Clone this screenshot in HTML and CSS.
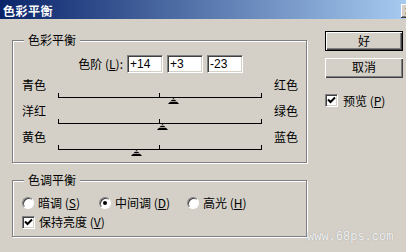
FILE: index.html
```html
<!DOCTYPE html>
<html lang="zh-CN">
<head>
<meta charset="utf-8">
<title>色彩平衡</title>
<link rel="stylesheet" href="styles.css">
</head>
<body>
<div class="titlebar">
  <span class="title">色彩平衡</span>
  <span class="close">×</span>
</div>
<div class="main">
  <div class="left">
    <fieldset class="group g1">
      <legend>色彩平衡</legend>
      <div class="levels">
        <span class="levels-label">色阶 (<u>L</u>):</span>
        <input class="field" value="+14" readonly>
        <input class="field" value="+3" readonly>
        <input class="field" value="-23" readonly>
      </div>
      <div class="slider-row">
        <span class="lab-l">青色</span>
        <div class="track"><span class="thumb" style="left:109px"></span></div>
        <span class="lab-r">红色</span>
      </div>
      <div class="slider-row">
        <span class="lab-l">洋红</span>
        <div class="track"><span class="thumb" style="left:98px"></span></div>
        <span class="lab-r">绿色</span>
      </div>
      <div class="slider-row">
        <span class="lab-l">黄色</span>
        <div class="track"><span class="thumb" style="left:72px"></span></div>
        <span class="lab-r">蓝色</span>
      </div>
    </fieldset>
    <fieldset class="group g2">
      <legend>色调平衡</legend>
      <div class="radios">
        <span class="opt"><span class="radio"></span>暗调 (<u>S</u>)</span>
        <span class="opt"><span class="radio on"></span>中间调 (<u>D</u>)</span>
        <span class="opt"><span class="radio"></span>高光 (<u>H</u>)</span>
      </div>
      <div class="opt check-row">
        <span class="box"><svg width="9" height="9" viewBox="0 0 9 9"><path d="M1 3.5 L3.5 6 L8 1.5" fill="none" stroke="#000" stroke-width="2"/></svg></span>保持亮度 (<u>V</u>)
      </div>
    </fieldset>
  </div>
  <div class="right">
    <div class="btn default">好</div>
    <div class="btn">取消</div>
    <div class="opt preview">
      <span class="box"><svg width="9" height="9" viewBox="0 0 9 9"><path d="M1 3.5 L3.5 6 L8 1.5" fill="none" stroke="#000" stroke-width="2"/></svg></span>预览 (<u>P</u>)
    </div>
  </div>
</div>
<div class="watermark">www.68ps.com</div>
</body>
</html>
```
FILE: styles.css
```css
html, body {
  margin: 0;
  padding: 0;
}
body {
  width: 406px;
  height: 252px;
  overflow: hidden;
  position: relative;
  background: #d4d0c8;
  color: #000;
  font: 12px/14px "Noto Sans CJK SC", "Noto Sans", sans-serif;
}
u {
  text-decoration: underline;
  text-underline-offset: 1px;
}
.titlebar {
  height: 19px;
  background: linear-gradient(to right, #0a246a, #a6caf0);
  display: flex;
  align-items: center;
  justify-content: space-between;
}
.title {
  color: #fff;
  font-weight: bold;
  font-size: 12px;
  letter-spacing: 0.5px;
  padding-left: 3px;
  padding-top: 2px;
}
.close {
  width: 16px;
  height: 14px;
  margin-right: -11px;
  margin-top: 2px;
  background: #d4d0c8;
  box-shadow: inset -1px -1px #404040, inset 1px 1px #fff, inset -2px -2px #808080;
  font: bold 12px/14px "DejaVu Sans", sans-serif;
  text-align: center;
}
.main {
  display: flex;
}
.left {
  padding-left: 12px;
  width: 295px;
}
.group {
  margin: 0;
  padding: 0;
  min-width: 0;
  border: 1px solid #808080;
  box-shadow: inset 1px 1px #fff, 1px 1px #fff;
}
.group legend {
  margin-left: 11px;
  padding: 0 4px;
  line-height: 14px;
  background: #d4d0c8;
}
.g1 {
  margin-top: 14px;
  padding-bottom: 6px;
}
.levels {
  display: flex;
  align-items: center;
  gap: 4px;
  margin-top: 8px;
  height: 18px;
}
.levels-label {
  width: 110px;
  text-align: right;
}
.field {
  width: 36px;
  height: 18px;
  box-sizing: border-box;
  margin: 0;
  padding: 0 2px;
  background: #fff;
  border: 1px solid;
  border-color: #808080 #fff #fff #808080;
  box-shadow: inset 1px 1px #404040, inset -1px -1px #d4d0c8;
  font: 12px "Liberation Sans", sans-serif;
  color: #000;
  outline: none;
}
.slider-row {
  display: grid;
  grid-template-columns: 36px 204px auto;
  height: 26px;
  margin-left: 9px;
}
.levels + .slider-row {
  margin-top: 5px;
}
.lab-r {
  margin-left: 12px;
}
.track {
  position: relative;
  height: 4px;
  margin-top: 15px;
  border: 1px solid #000;
  border-top: 0;
}
.track::after {
  content: "";
  position: absolute;
  left: 100px;
  top: 0;
  width: 1px;
  height: 4px;
  background: #000;
}
.thumb {
  position: absolute;
  top: 5px;
  width: 11px;
  height: 6px;
  clip-path: polygon(50% 0, 100% 100%, 0 100%);
  background:
    linear-gradient(#000, #000) bottom / 100% 1px no-repeat,
    repeating-linear-gradient(#000 0 1px, #9a968e 1px 2px);
}
.g2 {
  margin-top: 10px;
  padding-bottom: 7px;
}
.radios {
  display: grid;
  grid-template-columns: 77px 88px auto;
  margin: 9px 0 0 9px;
}
.opt {
  display: flex;
  align-items: center;
  height: 14px;
  white-space: nowrap;
}
.radio {
  position: relative;
  width: 12px;
  height: 12px;
  box-sizing: border-box;
  border-radius: 50%;
  background: #fff;
  border: 1px solid;
  border-color: #808080 #fff #fff #808080;
  box-shadow: inset 1px 1px #404040;
  margin-right: 4px;
}
.radio.on::after {
  content: "";
  position: absolute;
  left: 3px;
  top: 3px;
  width: 4px;
  height: 4px;
  border-radius: 50%;
  background: #000;
}
.check-row {
  margin: 5px 0 0 9px;
}
.box {
  width: 13px;
  height: 13px;
  box-sizing: border-box;
  background: #fff;
  border: 1px solid;
  border-color: #808080 #fff #fff #808080;
  box-shadow: inset 1px 1px #404040, inset -1px -1px #d4d0c8;
  margin-right: 4px;
  display: flex;
  align-items: center;
  justify-content: center;
}
.right {
  margin-left: 18px;
  padding-top: 12px;
  width: 78px;
}
.btn {
  height: 20px;
  box-sizing: border-box;
  text-align: center;
  line-height: 18px;
  box-shadow: inset 1px 1px #fff, inset -1px -1px #404040, inset -2px -2px #808080;
}
.btn.default {
  border: 1px solid #000;
  line-height: 17px;
}
.btn + .btn {
  margin-top: 7px;
}
.preview {
  margin-top: 16px;
  height: 13px;
}
.preview .box {
  margin-right: 5px;
}
.watermark {
  position: absolute;
  left: 307px;
  top: 231px;
  font: 12px/12px "Liberation Mono", monospace;
  color: #f6f6f6;
  text-shadow: 0 0 1px #8a8a8a;
}
```
